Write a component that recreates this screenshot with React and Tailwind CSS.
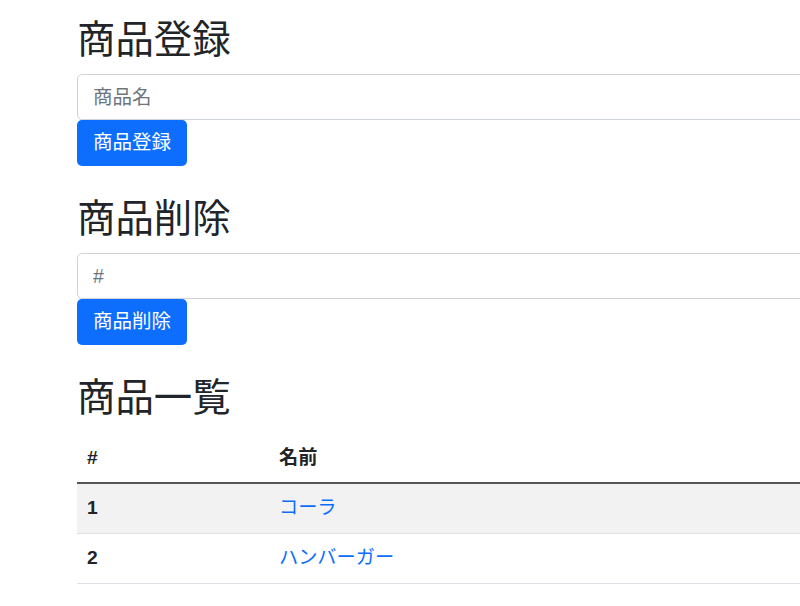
const products = [
  { id: 1, name: 'コーラ' },
  { id: 2, name: 'ハンバーガー' },
];

const font = { fontFamily: '"Liberation Sans", "Noto Sans CJK JP", sans-serif' };

function Section({ title, placeholder, button }) {
  return (
    <div className="mt-[30px]">
      <h2 className="text-[38.4px] leading-[46px] text-[#212529] mb-[11px]">{title}</h2>
      <input
        type="text"
        placeholder={placeholder}
        className="block w-full h-[46px] px-[15px] text-[19.5px] text-[#212529] placeholder:text-[#6c757d] border border-[#ced4da] rounded-[5px] outline-none"
      />
      <button className="h-[46px] px-[16px] text-[19.5px] text-white bg-[#0d6efd] rounded-[5px]">{button}</button>
    </div>
  );
}

export default function App() {
  return (
    <div className="w-full min-h-[606px] overflow-hidden bg-white" style={font}>
      <div className="w-[1100px] ml-[77px] pt-[17px] -mt-[30px]">
        <Section title="商品登録" placeholder="商品名" button="商品登録" />
        <Section title="商品削除" placeholder="#" button="商品削除" />

        <div className="mt-[30px]">
          <h2 className="text-[38.4px] leading-[46px] text-[#212529] mb-[13px]">商品一覧</h2>
          <table className="w-full text-[19.2px] text-[#212529] border-collapse">
            <thead>
              <tr className="border-b-2 border-[#555]">
                <th className="w-[192px] h-[49px] px-[10px] text-left font-bold">#</th>
                <th className="h-[49px] px-[10px] text-left font-bold">名前</th>
              </tr>
            </thead>
            <tbody>
              {products.map((p, i) => (
                <tr key={p.id} className={`border-b border-[#dee2e6] ${i % 2 === 0 ? 'bg-[#f2f2f2]' : ''}`}>
                  <td className="h-[50px] px-[10px] font-bold">{p.id}</td>
                  <td className="h-[50px] px-[10px]">
                    <a href="#" className="text-[#0d6efd]">{p.name}</a>
                  </td>
                </tr>
              ))}
            </tbody>
          </table>
        </div>
      </div>
    </div>
  );
}
